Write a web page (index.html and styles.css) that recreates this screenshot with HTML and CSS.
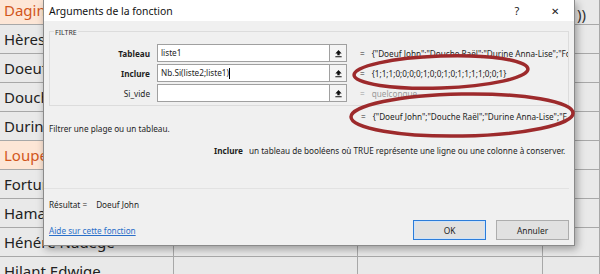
FILE: index.html
```html
<!DOCTYPE html>
<html lang="fr">

<head>
    <meta charset="UTF-8">
    <title>Arguments de la fonction</title>
    <link rel="stylesheet" href="styles.css">
</head>

<body>
    <!-- Feuille en arriere-plan -->
    <div class="sheet">
        <div class="cell name hl">Dagin Ivan</div><div class="cell"></div><div class="cell"></div><div class="cell formula">))</div>
        <div class="cell name">Hèresse Lise</div><div class="cell"></div><div class="cell"></div><div class="cell"></div>
        <div class="cell name">Doeuf John</div><div class="cell"></div><div class="cell"></div><div class="cell"></div>
        <div class="cell name">Douche Raël</div><div class="cell"></div><div class="cell"></div><div class="cell"></div>
        <div class="cell name">Durine Anna-Lise</div><div class="cell"></div><div class="cell"></div><div class="cell"></div>
        <div class="cell name hl">Loupe Alex</div><div class="cell"></div><div class="cell"></div><div class="cell"></div>
        <div class="cell name">Fortune Pierre</div><div class="cell"></div><div class="cell"></div><div class="cell"></div>
        <div class="cell name">Hamalibou Jean</div><div class="cell"></div><div class="cell"></div><div class="cell"></div>
        <div class="cell name">Hénéré Nadège</div><div class="cell"></div><div class="cell"></div><div class="cell"></div>
        <div class="cell name">Hilant Edwige</div><div class="cell"></div><div class="cell"></div><div class="cell"></div>
    </div>

    <!-- Boite de dialogue -->
    <div class="dialog">
        <div class="title-bar">
            <span class="title">Arguments de la fonction</span>
            <span class="title-btn help">?</span>
            <span class="title-btn close">✕</span>
        </div>

        <div class="group">
            <span class="group-title">FILTRE</span>
            <div class="args">
                <div class="arg">
                    <span class="arg-label bold">Tableau</span>
                    <div class="arg-input">liste1</div>
                    <div class="ref-btn"><svg viewBox="0 0 10 10" width="9" height="9"><path d="M5 1 L8.5 5 L6.3 5 L6.3 7 L3.7 7 L3.7 5 L1.5 5 Z M1.5 8 H8.5 V9.3 H1.5 Z" fill="#111"/></svg></div>
                    <div class="arg-value"><span class="eq">=</span>{"Doeuf John";"Douche Raël";"Durine Anna-Lise";"Fortune Pierre"}</div>
                </div>
                <div class="arg">
                    <span class="arg-label bold">Inclure</span>
                    <div class="arg-input">Nb.Si(liste2;liste1)<span class="caret"></span></div>
                    <div class="ref-btn"><svg viewBox="0 0 10 10" width="9" height="9"><path d="M5 1 L8.5 5 L6.3 5 L6.3 7 L3.7 7 L3.7 5 L1.5 5 Z M1.5 8 H8.5 V9.3 H1.5 Z" fill="#111"/></svg></div>
                    <div class="arg-value"><span class="eq">=</span>{1;1;1;0;0;0;0;1;0;0;1;0;1;1;1;1;0;0;1}</div>
                </div>
                <div class="arg">
                    <span class="arg-label">Si_vide</span>
                    <div class="arg-input"></div>
                    <div class="ref-btn"><svg viewBox="0 0 10 10" width="9" height="9"><path d="M5 1 L8.5 5 L6.3 5 L6.3 7 L3.7 7 L3.7 5 L1.5 5 Z M1.5 8 H8.5 V9.3 H1.5 Z" fill="#111"/></svg></div>
                    <div class="arg-value muted"><span class="eq">=</span>quelconque</div>
                </div>
            </div>
        </div>

        <div class="result-value"><span class="eq">=</span>{"Doeuf John";"Douche Raël";"Durine Anna-Lise";"Fortune Pierre"}</div>
        <div class="summary">Filtrer une plage ou un tableau.</div>
        <div class="arg-help"><span class="bold">Inclure</span><span>un tableau de booléens où TRUE représente une ligne ou une colonne à conserver.</span></div>

        <div class="separator"></div>

        <div class="result"><span>Résultat =</span><span class="result-text">Doeuf John</span></div>
        <div class="footer">
            <a class="help-link" href="#">Aide sur cette fonction</a>
            <div class="buttons">
                <button class="btn default">OK</button>
                <button class="btn">Annuler</button>
            </div>
        </div>
    </div>

    <!-- Annotations a main levee -->
    <svg class="marks" width="600" height="274" viewBox="0 0 600 274">
        <ellipse cx="441" cy="72" rx="87" ry="16" transform="rotate(-2 441 72)" fill="none" stroke="#9d2a2c" stroke-width="3.5"/>
        <ellipse cx="462" cy="115" rx="111" ry="21" transform="rotate(-1 462 115)" fill="none" stroke="#9d2a2c" stroke-width="3.5"/>
    </svg>
</body>

</html>
```

FILE: styles.css
```css
body {
    margin: 0;
    width: 600px;
    height: 274px;
    overflow: hidden;
    position: relative;
    font-family: "Noto Sans", "Open Sans", sans-serif;
    background-color: #e9e9e9;
}

/* feuille */
.sheet {
    display: grid;
    grid-template-columns: 174px 184px 185px 1fr;
    grid-auto-rows: 29px;
    margin-top: -4px;
}

.cell {
    background-color: #e9e9e9;
    border-right: 1px solid #a8a8a8;
    border-bottom: 1px solid #a8a8a8;
    box-sizing: border-box;
}

.cell.name {
    font-size: 15px;
    line-height: 28px;
    padding-left: 4px;
    color: #222;
    white-space: nowrap;
}

.cell.hl {
    background-color: #fde6d6;
    color: #d2561c;
}

.cell.formula {
    font-size: 15px;
    line-height: 36px;
    padding-left: 34px;
    color: #333;
}

/* dialogue */
.dialog {
    position: absolute;
    left: 43px;
    top: 0;
    width: 532px;
    height: 246px;
    box-sizing: border-box;
    background-color: #f0f0f0;
    border: 1px solid #8a8a8a;
    border-top: none;
    box-shadow: 2px 3px 8px rgba(0, 0, 0, 0.35);
    font-size: 8.2px;
    color: #1e1e1e;
    display: flex;
    flex-direction: column;
}

.title-bar {
    height: 21px;
    background-color: #fff;
    display: flex;
    align-items: center;
    padding-left: 5px;
}

.title {
    flex: 1;
    font-size: 10.4px;
    color: #111;
}

.title-btn {
    width: 38px;
    text-align: center;
    font-size: 11px;
    color: #222;
}

.close {
    font-size: 10px;
}

.bold {
    font-weight: bold;
}

.group {
    margin: 10px 5px 0;
    border: 1px solid #dcdcdc;
    padding-bottom: 3px;
}

.group-title {
    display: block;
    width: fit-content;
    margin: -4px 0 0 4px;
    padding: 0 1px;
    background-color: #f0f0f0;
    font-size: 7px;
    line-height: 10px;
    color: #333;
}

.args {
    margin-top: 6px;
    display: flex;
    flex-direction: column;
    gap: 2px;
}

.arg {
    display: flex;
    align-items: center;
    height: 18px;
}

.arg-label {
    width: 100px;
    text-align: right;
    margin-right: 7px;
}

.arg-input {
    width: 173px;
    height: 18px;
    box-sizing: border-box;
    background-color: #fff;
    border: 1px solid #a0a0a0;
    padding-left: 3px;
    line-height: 16px;
    white-space: nowrap;
}

.caret {
    display: inline-block;
    width: 1px;
    height: 11px;
    background-color: #000;
    vertical-align: middle;
}

.ref-btn {
    width: 17px;
    height: 18px;
    box-sizing: border-box;
    border: 1px solid #a0a0a0;
    border-left: none;
    background-color: #f4f4f4;
    display: flex;
    align-items: center;
    justify-content: center;
}

.arg-value,
.result-value {
    flex: 1;
    white-space: nowrap;
    overflow: hidden;
    padding-left: 13px;
}

.eq {
    margin-right: 7px;
}

.muted {
    color: #9a9a9a;
}

.result-value {
    flex: none;
    margin-top: 5px;
    margin-left: 306px;
    padding-left: 11px;
    width: 206px;
    line-height: 12px;
}

.summary {
    padding-left: 5px;
    line-height: 12px;
}

.arg-help {
    margin-top: 10px;
    padding-left: 170px;
    line-height: 12px;
    display: flex;
    gap: 6px;
    white-space: nowrap;
}

.separator {
    margin: 31px 5px 0 0;
    border-top: 1px solid #e2e2e2;
}

.result {
    margin-top: 10px;
    padding-left: 5px;
    line-height: 12px;
    display: flex;
    gap: 9px;
}

.footer {
    margin-top: 9px;
    display: flex;
    align-items: center;
    padding: 0 5px;
    height: 20px;
}

.help-link {
    flex: 1;
    color: #2a6fc9;
    text-decoration: underline;
}

.buttons {
    display: flex;
    gap: 10px;
}

.btn {
    width: 73px;
    height: 20px;
    font-family: inherit;
    font-size: 8.4px;
    color: #1e1e1e;
    background-color: #e1e1e1;
    border: 1px solid #adadad;
    padding: 0;
}

.btn.default {
    border: 1px solid #2c7cd9;
    box-shadow: inset 0 0 0 1px #cfe3f8;
}

.marks {
    position: absolute;
    left: 0;
    top: 0;
    pointer-events: none;
}
```
